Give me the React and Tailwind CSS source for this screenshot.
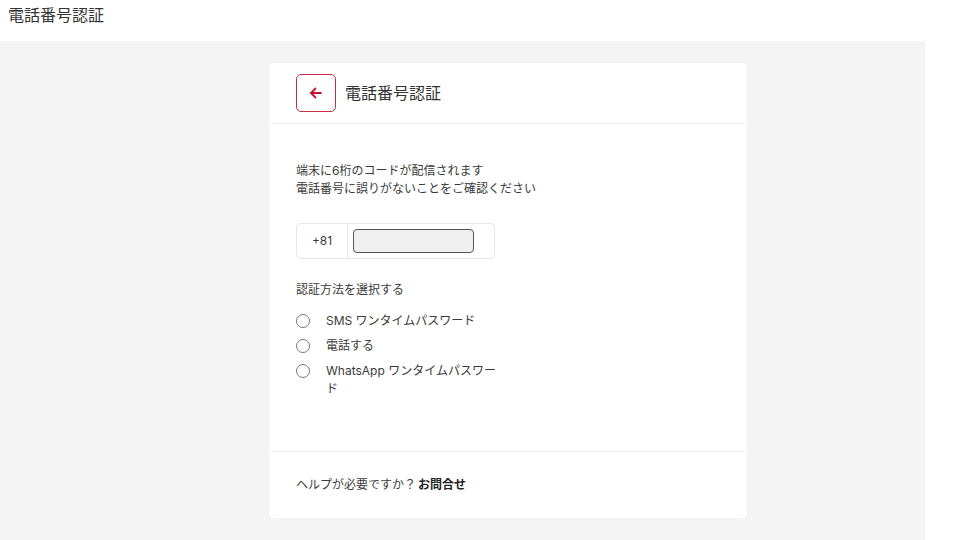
import { useState } from "react";

const FONT = "font-['Inter','Noto_Sans_CJK_JP',sans-serif]";

const METHODS = [
  { id: "sms", label: "SMS ワンタイムパスワード" },
  { id: "call", label: "電話する" },
  { id: "whatsapp", label: "WhatsApp ワンタイムパスワード" },
];

function BackButton() {
  return (
    <button className="w-[40px] h-[38px] flex items-center justify-center border border-[#c8303e] rounded-[5px] bg-white">
      <svg width="16" height="16" viewBox="0 0 16 16" fill="none" stroke="#c8102e" strokeWidth="1.8" strokeLinecap="round" strokeLinejoin="round">
        <path d="M13 8H3" />
        <path d="M7.5 3.5L3 8l4.5 4.5" />
      </svg>
    </button>
  );
}

export default function App() {
  const [method, setMethod] = useState(null);

  return (
    <div className={`w-[960px] h-[540px] bg-white overflow-hidden ${FONT}`}>
      <div className="h-[41px] px-[8px] pt-[3px] text-[16px] text-[#333]">電話番号認証</div>
      <div className="w-[925px] h-[499px] bg-[#f4f4f4] pt-[22px]">
        <div className="ml-[269px] w-[478px] bg-white rounded-[4px] shadow-[0_0_2px_rgba(0,0,0,0.05)]">
          {/* header */}
          <div className="h-[61px] px-[27px] flex items-center gap-[9px] border-b border-[#f0f0f0]">
            <BackButton />
            <h1 className="text-[16px] text-[#333]">電話番号認証</h1>
          </div>

          {/* body */}
          <div className="h-[327px] px-[27px] pt-[38px]">
            <p className="text-[12px] leading-[18px] text-[#3a3a3a]">
              端末に6桁のコードが配信されます
              <br />
              電話番号に誤りがないことをご確認ください
            </p>

            <div className="mt-[25px] w-[199px] h-[36px] flex items-center border border-[#e6e6e6] rounded-[5px]">
              <div className="w-[51px] h-full flex items-center justify-center border-r border-[#e6e6e6] text-[12px] text-[#3a3a3a]">
                +81
              </div>
              <div className="ml-[5px] w-[121px] h-[24px] bg-[#efefef] border border-[#555] rounded-[4px]" />
            </div>

            <p className="mt-[22px] text-[12px] leading-[18px] text-[#3a3a3a]">認証方法を選択する</p>

            <div className="mt-[13px] flex flex-col gap-[7px]">
              {METHODS.map((m) => (
                <label key={m.id} className="flex items-start gap-[16px] cursor-pointer" onClick={() => setMethod(m.id)}>
                  <span className="mt-[2px] w-[14px] h-[14px] rounded-full border border-[#777] bg-white flex items-center justify-center">
                    {method === m.id && <span className="w-[6px] h-[6px] rounded-full bg-[#c8102e]" />}
                  </span>
                  <span className="w-[170px] text-[12px] leading-[18px] text-[#3a3a3a]">{m.label}</span>
                </label>
              ))}
            </div>
          </div>

          {/* footer */}
          <div className="h-[67px] px-[27px] flex items-center border-t border-[#f0f0f0] text-[12px] text-[#3a3a3a]">
            ヘルプが必要ですか？<span className="ml-[2px] font-bold text-[#222]">お問合せ</span>
          </div>
        </div>
      </div>
    </div>
  );
}
